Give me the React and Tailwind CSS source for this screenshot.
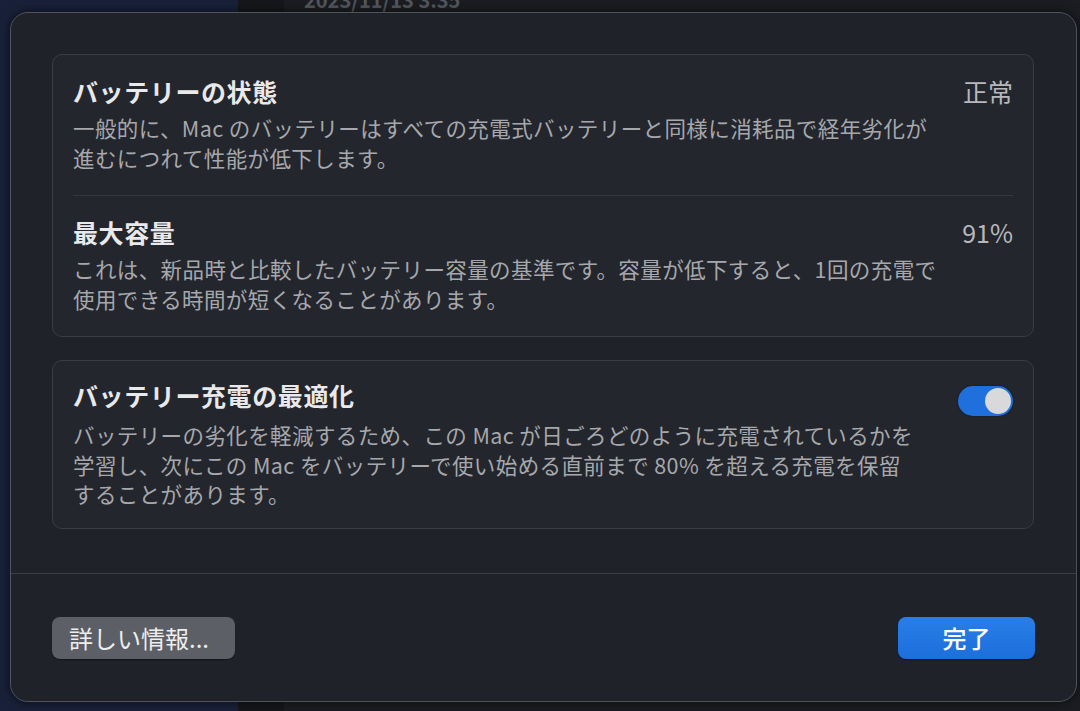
import React from "react";

const jp = { fontFamily: '"Noto Sans CJK JP", "Noto Sans", sans-serif' };

const Row = ({ title, value, lines, first }) => (
  <div
    className={`flex justify-between pt-[20px] pb-[23px] ${
      first ? "" : "border-t border-[#34373d]"
    }`}
  >
    <div>
      <p className="text-[25px] leading-[32px] font-semibold tracking-[0.6px] text-[#e9e9eb]">
        {title}
      </p>
      <p className="mt-[6px] text-[21.5px] leading-[29.5px] tracking-[0.4px] text-[#a7a8ac] whitespace-nowrap">
        {lines.map((l, i) => (
          <span key={i} className="block">
            {l}
          </span>
        ))}
      </p>
    </div>
    <p className="text-[25px] leading-[32px] text-[#b7b8bc]">{value}</p>
  </div>
);

export default function App() {
  return (
    <div
      className="relative w-[1080px] h-[711px] overflow-hidden bg-[#17191d]"
      style={jp}
    >
      {/* window behind the sheet */}
      <div className="flex h-full">
        <div className="w-[238px] h-full bg-[#19213a]" />
        <div className="w-[46px] h-full bg-[#15171b]" />
        <div className="flex-1 h-full bg-[#1b1d22]">
          <p className="mt-[-15px] ml-[20px] text-[20px] font-semibold text-[#55585e]">
            2023/11/13 3:35
          </p>
        </div>
      </div>

      {/* sheet */}
      <div className="absolute left-[10px] top-[12px] w-[1067px] h-[690px] flex flex-col rounded-[18px] border border-[#50535a] bg-[#1f2228] shadow-[0_0_12px_rgba(0,0,0,0.6)]">
        <div className="flex flex-col gap-[23px] pt-[41px] pl-[41px] pr-[42px] pb-[44px]">
          <div className="rounded-[10px] border border-[#3a3d43] bg-[#23262c] px-[20px]">
            <Row
              first
              title="バッテリーの状態"
              value="正常"
              lines={[
                "一般的に、Mac のバッテリーはすべての充電式バッテリーと同様に消耗品で経年劣化が",
                "進むにつれて性能が低下します。",
              ]}
            />
            <Row
              title="最大容量"
              value="91%"
              lines={[
                "これは、新品時と比較したバッテリー容量の基準です。容量が低下すると、1回の充電で",
                "使用できる時間が短くなることがあります。",
              ]}
            />
          </div>

          <div className="rounded-[10px] border border-[#3a3d43] bg-[#23262c] pl-[20px] pr-[20px] pt-[18px] pb-[19px] flex justify-between">
            <div>
              <p className="text-[25px] leading-[32px] font-semibold tracking-[0.6px] text-[#e9e9eb]">
                バッテリー充電の最適化
              </p>
              <p className="mt-[9px] text-[21.5px] leading-[29.5px] tracking-[0.4px] text-[#a7a8ac] whitespace-nowrap">
                <span className="block">
                  バッテリーの劣化を軽減するため、この Mac が日ごろどのように充電されているかを
                </span>
                <span className="block">
                  学習し、次にこの Mac をバッテリーで使い始める直前まで 80% を超える充電を保留
                </span>
                <span className="block">することがあります。</span>
              </p>
            </div>
            <div className="mt-[7px] w-[55px] h-[30px] rounded-full bg-[#1f6fdc] flex items-center justify-end pr-[2px] shadow-[0_0_2px_rgba(0,0,0,0.5)]">
              <div className="w-[26px] h-[26px] rounded-full bg-[#d9d9db]" />
            </div>
          </div>
        </div>

        <div className="border-t border-[#3b3e44] flex justify-between items-start pt-[43px] pl-[41px] pr-[41px]">
          <button
            type="button"
            className="h-[42px] w-[183px] rounded-[8px] bg-[#5c5f65] text-[24px] leading-[42px] text-[#eeeeef] text-left pl-[17px] shadow-[0_1px_1px_rgba(0,0,0,0.4)]"
            style={jp}
          >
            詳しい情報...
          </button>
          <button
            type="button"
            className="h-[42px] w-[137px] rounded-[8px] bg-gradient-to-b from-[#2a7ee6] to-[#1c6fdc] text-[24px] leading-[42px] font-medium text-white shadow-[0_1px_1px_rgba(0,0,0,0.4)]"
            style={jp}
          >
            完了
          </button>
        </div>
      </div>
    </div>
  );
}
